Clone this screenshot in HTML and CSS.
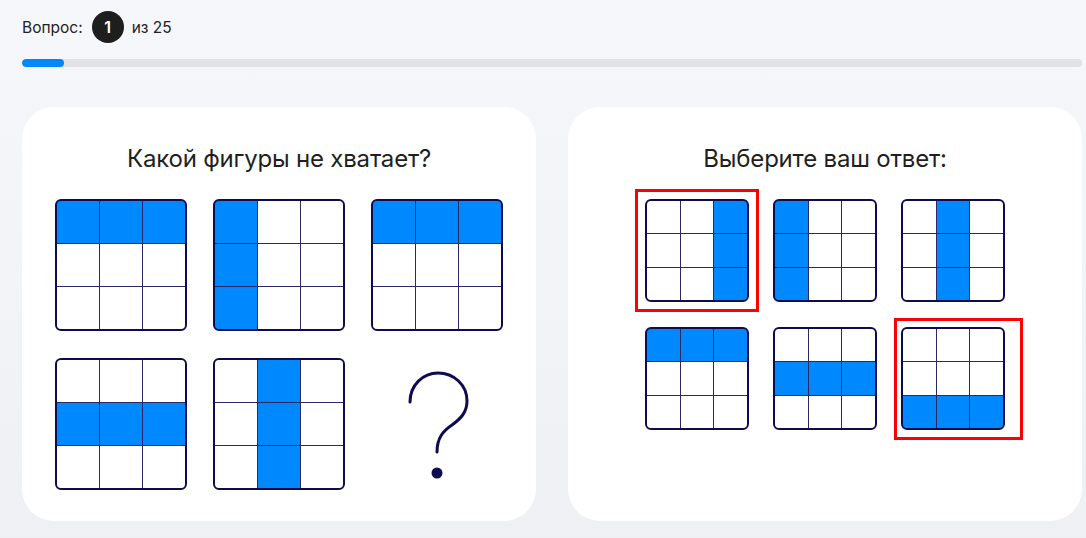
FILE: index.html
```html
<!DOCTYPE html>
<html lang="ru">
<head>
    <meta charset="UTF-8">
    <title>Тест</title>
    <link rel="stylesheet" href="styles.css">
</head>
<body>
<div id="top">
    <div class="counter">
        <span>Вопрос:</span>
        <span class="num">1</span>
        <span>из 25</span>
    </div>
    <div class="progress"><div class="progress-fill" style="width: 4%"></div></div>
</div>

<div id="cards">
    <div class="card">
        <h2 class="card-title">Какой фигуры не хватает?</h2>
        <div class="puzzle">
            <div class="fig" data-cells="111000000"></div>
            <div class="fig" data-cells="100100100"></div>
            <div class="fig" data-cells="111000000"></div>
            <div class="fig" data-cells="000111000"></div>
            <div class="fig" data-cells="010010010"></div>
            <div class="missing">
                <svg width="132" height="132" viewBox="0 0 132 132">
                    <path d="M39 44 C39 27 52 15 67 15 C83 15 96 27 96 43 C96 55 89 61 81 67 C72 73 66 80 66 94"
                          fill="none" stroke="#0d0c4f" stroke-width="3" stroke-linecap="round"/>
                    <circle cx="66" cy="115" r="5.5" fill="#0d0c4f"/>
                </svg>
            </div>
        </div>
    </div>

    <div class="card">
        <h2 class="card-title">Выберите ваш ответ:</h2>
        <div class="answers">
            <div class="option picked"><div class="fig" data-cells="001001001"></div></div>
            <div class="option"><div class="fig" data-cells="100100100"></div></div>
            <div class="option"><div class="fig" data-cells="010010010"></div></div>
            <div class="option"><div class="fig" data-cells="111000000"></div></div>
            <div class="option"><div class="fig" data-cells="000111000"></div></div>
            <div class="option picked picked-wide"><div class="fig" data-cells="000000111"></div></div>
        </div>
    </div>
</div>

<script>
    var figs = document.querySelectorAll(".fig");
    for (var i = 0; i < figs.length; i++) {
        var cells = figs[i].getAttribute("data-cells");
        var html = "";
        for (var j = 0; j < cells.length; j++) {
            html += '<div class="cell' + (cells[j] == "1" ? ' on' : '') + '"></div>';
        }
        figs[i].innerHTML = html;
    }
</script>
</body>
</html>
```

FILE: styles.css
```css
* {
    padding: 0;
    margin: 0;
    box-sizing: border-box;
}

html {
    width: 100%;
    height: 100%;
}

body {
    width: 100%;
    height: 100%;
    padding: 0 4px 0 22px;
    font-family: "Inter", "Noto Sans", sans-serif;
    color: #1f1f1f;
    background: linear-gradient(180deg, #f6f7fb 0%, #f2f3f7 60%, #eef0f4 100%);
    overflow: hidden;
}

#top {
    padding-top: 11px;
}

.counter {
    display: flex;
    align-items: center;
    height: 32px;
    font-size: 15.5px;
    color: #222222;
}

.num {
    width: 32px;
    height: 32px;
    margin: 0 8px 0 9px;
    border-radius: 50%;
    background: #1e1e1e;
    color: #ffffff;
    font-size: 16px;
    font-weight: 600;
    display: flex;
    align-items: center;
    justify-content: center;
}

.progress {
    margin-top: 16px;
    width: 1060px;
    height: 8px;
    border-radius: 4px;
    background: #e1e2e6;
    overflow: hidden;
}

.progress-fill {
    height: 100%;
    border-radius: 4px;
    background: #0088ff;
}

#cards {
    margin-top: 40px;
    display: flex;
    gap: 32px;
}

.card {
    width: 514px;
    height: 414px;
    padding-top: 37px;
    background: #ffffff;
    border-radius: 32px;
    display: flex;
    flex-direction: column;
    align-items: center;
}

.card-title {
    font-size: 24px;
    font-weight: 400;
    line-height: 30px;
    letter-spacing: -0.2px;
    color: #1f1f1f;
}

.puzzle {
    margin-top: 25px;
    display: grid;
    grid-template-columns: repeat(3, 132px);
    grid-auto-rows: 132px;
    gap: 27px 26px;
}

.answers {
    margin-top: 25px;
    display: grid;
    grid-template-columns: repeat(3, 104px);
    grid-auto-rows: 104px;
    gap: 24px;
}

.fig {
    width: 100%;
    height: 100%;
    border: 2px solid #0d0c4f;
    border-radius: 6px;
    overflow: hidden;
    background: #2a2966;
    display: grid;
    grid-template-columns: repeat(3, 1fr);
    grid-template-rows: repeat(3, 1fr);
    gap: 1px;
}

.cell {
    background: #ffffff;
}

.cell.on {
    background: #0088ff;
}

.option {
    position: relative;
    width: 104px;
    height: 103px;
}

.picked::after {
    content: "";
    position: absolute;
    top: -10px;
    left: -10px;
    right: -10px;
    bottom: -10px;
    border: 3px solid #ff0000;
}

.picked-wide::after {
    top: -9px;
    left: -7px;
    right: -18px;
    bottom: -10px;
}
```
